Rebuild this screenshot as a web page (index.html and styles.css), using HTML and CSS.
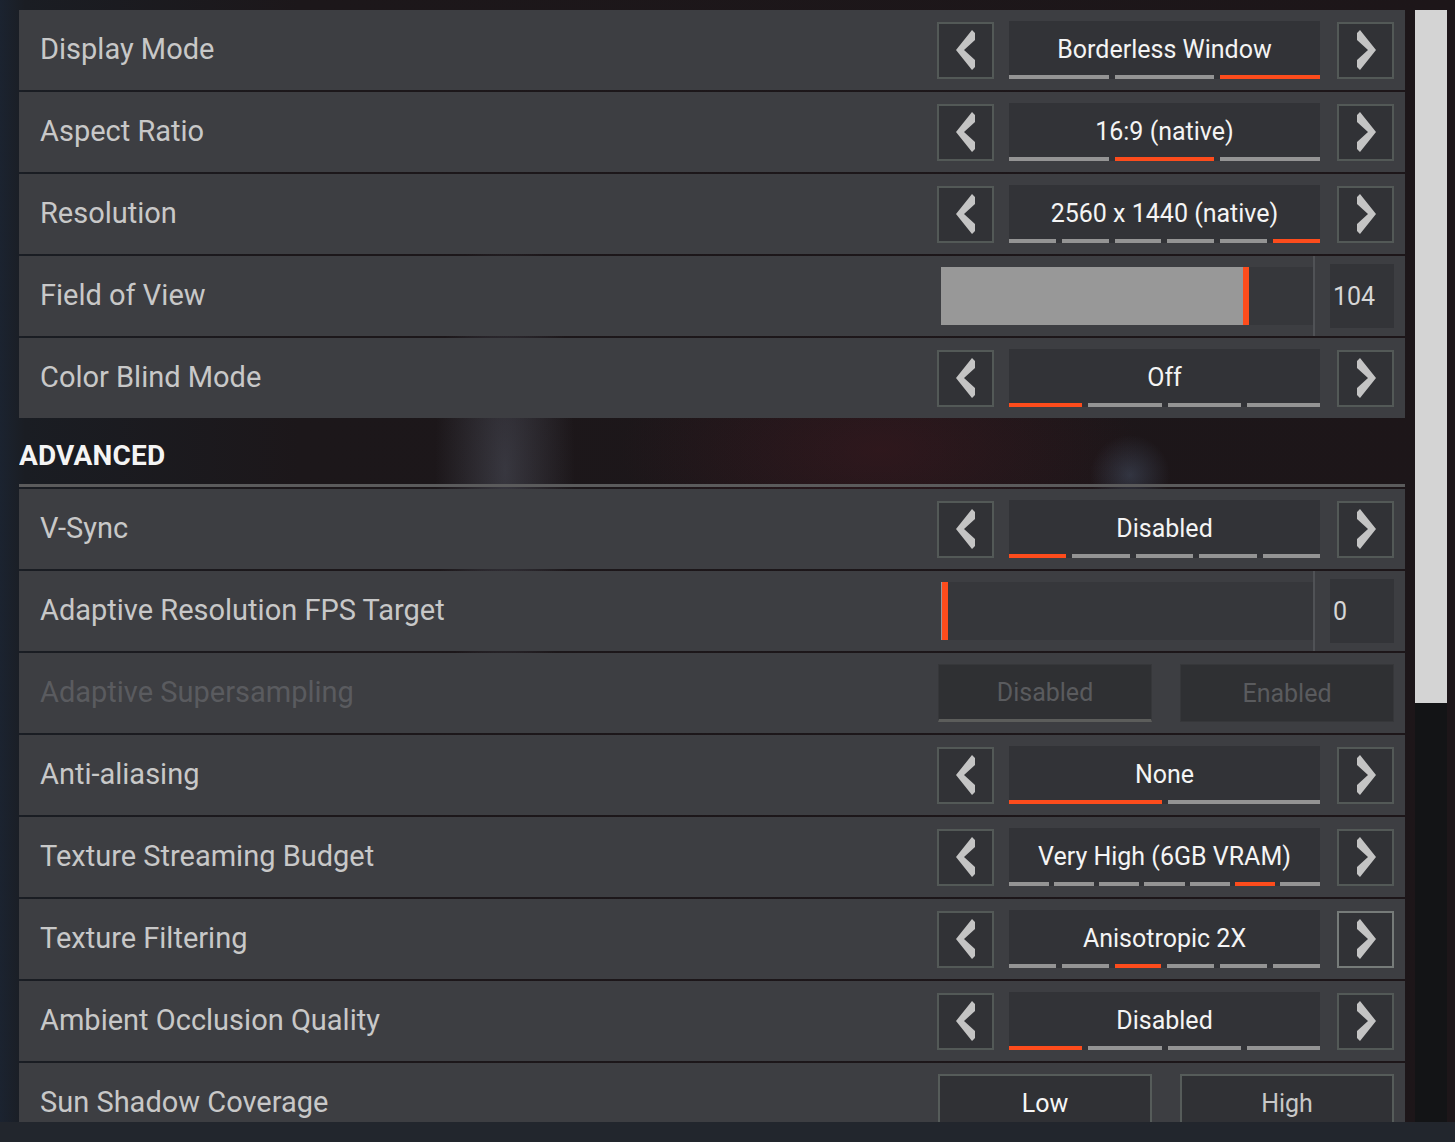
FILE: index.html
```html
<!DOCTYPE html>
<html>
<head>
<meta charset="utf-8">
<link rel="stylesheet" href="styles.css">
</head>
<body>
<div class="screen">
  <div class="list">
    <div class="row">
      <div class="label">Display Mode</div>
      <div class="control">
        <div class="arrow"><svg class="chev" viewBox="0 0 20 40"><polygon points="16,0 19,3 19,10 8,20 19,30 19,37 16,40 0,20"/></svg></div>
        <div class="value"><div class="vtext">Borderless Window</div><div class="bars"><span></span><span></span><span class="on"></span></div></div>
        <div class="arrow"><svg class="chev" viewBox="0 0 20 40"><polygon points="4,0 1,3 1,10 12,20 1,30 1,37 4,40 20,20"/></svg></div>
      </div>
    </div>
    <div class="row">
      <div class="label">Aspect Ratio</div>
      <div class="control">
        <div class="arrow"><svg class="chev" viewBox="0 0 20 40"><polygon points="16,0 19,3 19,10 8,20 19,30 19,37 16,40 0,20"/></svg></div>
        <div class="value"><div class="vtext">16:9 (native)</div><div class="bars"><span></span><span class="on"></span><span></span></div></div>
        <div class="arrow"><svg class="chev" viewBox="0 0 20 40"><polygon points="4,0 1,3 1,10 12,20 1,30 1,37 4,40 20,20"/></svg></div>
      </div>
    </div>
    <div class="row">
      <div class="label">Resolution</div>
      <div class="control">
        <div class="arrow"><svg class="chev" viewBox="0 0 20 40"><polygon points="16,0 19,3 19,10 8,20 19,30 19,37 16,40 0,20"/></svg></div>
        <div class="value"><div class="vtext">2560 x 1440 (native)</div><div class="bars"><span></span><span></span><span></span><span></span><span></span><span class="on"></span></div></div>
        <div class="arrow"><svg class="chev" viewBox="0 0 20 40"><polygon points="4,0 1,3 1,10 12,20 1,30 1,37 4,40 20,20"/></svg></div>
      </div>
    </div>
    <div class="row">
      <div class="label">Field of View</div>
      <div class="control slider-ctl">
        <div class="track"><div class="fill" style="width: 302px"></div><div class="handle"></div></div>
        <div class="divider"></div>
        <div class="num">104</div>
      </div>
    </div>
    <div class="row">
      <div class="label">Color Blind Mode</div>
      <div class="control">
        <div class="arrow"><svg class="chev" viewBox="0 0 20 40"><polygon points="16,0 19,3 19,10 8,20 19,30 19,37 16,40 0,20"/></svg></div>
        <div class="value"><div class="vtext">Off</div><div class="bars"><span class="on"></span><span></span><span></span><span></span></div></div>
        <div class="arrow"><svg class="chev" viewBox="0 0 20 40"><polygon points="4,0 1,3 1,10 12,20 1,30 1,37 4,40 20,20"/></svg></div>
      </div>
    </div>

    <div class="section-head">ADVANCED</div>

    <div class="row">
      <div class="label">V-Sync</div>
      <div class="control">
        <div class="arrow"><svg class="chev" viewBox="0 0 20 40"><polygon points="16,0 19,3 19,10 8,20 19,30 19,37 16,40 0,20"/></svg></div>
        <div class="value"><div class="vtext">Disabled</div><div class="bars"><span class="on"></span><span></span><span></span><span></span><span></span></div></div>
        <div class="arrow"><svg class="chev" viewBox="0 0 20 40"><polygon points="4,0 1,3 1,10 12,20 1,30 1,37 4,40 20,20"/></svg></div>
      </div>
    </div>
    <div class="row">
      <div class="label">Adaptive Resolution FPS Target</div>
      <div class="control slider-ctl">
        <div class="track"><div class="fill" style="width: 1px"></div><div class="handle"></div></div>
        <div class="divider"></div>
        <div class="num">0</div>
      </div>
    </div>
    <div class="row">
      <div class="label dim">Adaptive Supersampling</div>
      <div class="control toggles">
        <div class="tbtn disabled sel">Disabled</div>
        <div class="tbtn disabled">Enabled</div>
      </div>
    </div>
    <div class="row">
      <div class="label">Anti-aliasing</div>
      <div class="control">
        <div class="arrow"><svg class="chev" viewBox="0 0 20 40"><polygon points="16,0 19,3 19,10 8,20 19,30 19,37 16,40 0,20"/></svg></div>
        <div class="value"><div class="vtext">None</div><div class="bars"><span class="on"></span><span></span></div></div>
        <div class="arrow"><svg class="chev" viewBox="0 0 20 40"><polygon points="4,0 1,3 1,10 12,20 1,30 1,37 4,40 20,20"/></svg></div>
      </div>
    </div>
    <div class="row">
      <div class="label">Texture Streaming Budget</div>
      <div class="control">
        <div class="arrow"><svg class="chev" viewBox="0 0 20 40"><polygon points="16,0 19,3 19,10 8,20 19,30 19,37 16,40 0,20"/></svg></div>
        <div class="value"><div class="vtext">Very High (6GB VRAM)</div><div class="bars tight"><span></span><span></span><span></span><span></span><span></span><span class="on"></span><span></span></div></div>
        <div class="arrow"><svg class="chev" viewBox="0 0 20 40"><polygon points="4,0 1,3 1,10 12,20 1,30 1,37 4,40 20,20"/></svg></div>
      </div>
    </div>
    <div class="row">
      <div class="label">Texture Filtering</div>
      <div class="control">
        <div class="arrow"><svg class="chev" viewBox="0 0 20 40"><polygon points="16,0 19,3 19,10 8,20 19,30 19,37 16,40 0,20"/></svg></div>
        <div class="value"><div class="vtext">Anisotropic 2X</div><div class="bars"><span></span><span></span><span class="on"></span><span></span><span></span><span></span></div></div>
        <div class="arrow focus"><svg class="chev" viewBox="0 0 20 40"><polygon points="4,0 1,3 1,10 12,20 1,30 1,37 4,40 20,20"/></svg></div>
      </div>
    </div>
    <div class="row">
      <div class="label">Ambient Occlusion Quality</div>
      <div class="control">
        <div class="arrow"><svg class="chev" viewBox="0 0 20 40"><polygon points="16,0 19,3 19,10 8,20 19,30 19,37 16,40 0,20"/></svg></div>
        <div class="value"><div class="vtext">Disabled</div><div class="bars"><span class="on"></span><span></span><span></span><span></span></div></div>
        <div class="arrow"><svg class="chev" viewBox="0 0 20 40"><polygon points="4,0 1,3 1,10 12,20 1,30 1,37 4,40 20,20"/></svg></div>
      </div>
    </div>
    <div class="row">
      <div class="label">Sun Shadow Coverage</div>
      <div class="control toggles">
        <div class="tbtn active">Low</div>
        <div class="tbtn">High</div>
      </div>
    </div>
  </div>
  <div class="scrollbar"><div class="thumb"></div></div>
</div>
</body>
</html>
```

FILE: styles.css
```css
* { box-sizing: border-box; }

html, body {
  margin: 0;
  padding: 0;
}

body {
  width: 1455px;
  height: 1142px;
  overflow: hidden;
  font-family: Roboto, "Liberation Sans", sans-serif;
  background:
    linear-gradient(to bottom, rgba(0,0,0,0) 1122px, #22262d 1122px),
    radial-gradient(ellipse 70px 260px at 505px 470px, rgba(120,130,150,0.30), rgba(0,0,0,0) 100%),
    radial-gradient(ellipse 40px 40px at 1130px 475px, rgba(90,110,140,0.35), rgba(0,0,0,0) 100%),
    radial-gradient(ellipse 260px 120px at 880px 450px, rgba(80,25,35,0.35), rgba(0,0,0,0) 100%),
    linear-gradient(to right, #1b2330 0, #1a1d23 25px, #1c171a 300px, #1d1619 100%);
}

.screen {
  display: flex;
  gap: 10px;
  padding: 10px 8px 0 19px;
  height: 1142px;
}

.list {
  width: 1386px;
  height: 1112px;
  overflow: hidden;
  flex: none;
}

.row {
  height: 80px;
  margin-bottom: 2px;
  background: #3d3e42;
  display: flex;
  align-items: center;
  justify-content: space-between;
  padding: 0 11px 0 21px;
}

.label {
  font-size: 29px;
  color: #c8c8c8;
  padding-bottom: 2px;
}

.label.dim {
  color: #5a5b5f;
}

.control {
  width: 457px;
  height: 58px;
  display: flex;
  align-items: center;
}

.arrow {
  width: 57px;
  height: 57px;
  flex: none;
  border: 2px solid #535957;
  background: #313236;
  display: flex;
  align-items: center;
  justify-content: center;
}

.arrow.focus {
  border-color: #767b79;
}

.chev {
  width: 20px;
  height: 40px;
  fill: #c4c4c4;
}

.value {
  width: 311px;
  height: 58px;
  margin: 0 17px 0 15px;
  background: #323337;
  display: flex;
  flex-direction: column;
}

.vtext {
  flex: 1;
  display: flex;
  align-items: center;
  justify-content: center;
  font-size: 25px;
  color: #f4f4f4;
  padding-top: 3px;
}

.bars {
  height: 4px;
  display: flex;
  gap: 6px;
}

.bars.tight {
  gap: 5px;
}

.bars span {
  flex: 1;
  background: #949494;
}

.bars span.on {
  background: #fd4c1c;
}

/* slider */
.slider-ctl {
  height: 80px;
  align-items: center;
  padding-left: 4px;
}

.track {
  width: 372px;
  height: 58px;
  background: #36373b;
  display: flex;
}

.fill {
  height: 100%;
  background: #989898;
}

.handle {
  width: 6px;
  height: 100%;
  background: #fd4c1c;
}

.divider {
  width: 2px;
  align-self: stretch;
  background: #505256;
}

.num {
  width: 64px;
  height: 64px;
  margin-left: 15px;
  background: #333438;
  font-size: 25px;
  color: #d6d6d6;
  display: flex;
  align-items: center;
  padding-left: 3px;
}

/* toggles */
.toggles {
  justify-content: space-between;
  padding-left: 1px;
}

.tbtn {
  width: 214px;
  height: 58px;
  flex: none;
  display: flex;
  align-items: center;
  justify-content: center;
  font-size: 25px;
  background: #303135;
  border: 2px solid #565c5a;
  color: #c8c8c8;
}

.tbtn.active {
  color: #f6f6f6;
}

.tbtn.disabled {
  border: 1px solid #36373a;
  color: #5a5b5e;
  background: #2f3033;
}

.tbtn.disabled.sel {
  border-bottom: 3px solid #5c5d5b;
}

/* header */
.section-head {
  height: 67px;
  margin-bottom: 2px;
  border-bottom: 3px solid #5b5b5c;
  font-size: 28px;
  font-weight: 700;
  color: #f4f4f4;
  padding-top: 19px;
  letter-spacing: 0.2px;
}

/* scrollbar */
.scrollbar {
  width: 32px;
  height: 1112px;
  flex: none;
  background: #131416;
}

.thumb {
  height: 693px;
  background: #d4d4d4;
}
```
